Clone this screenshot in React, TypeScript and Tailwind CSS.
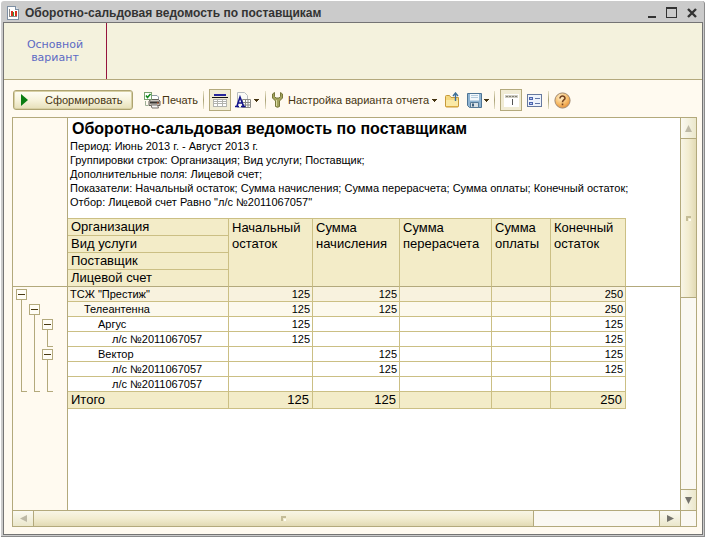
import { useState } from "react";
import type { ReactNode } from "react";

type Row = {
  name: string;
  level: number;
  values: string[];
  bg: string;
  tree: ("box" | "line" | "end")[];
};

const rows: Row[] = [
  {
    name: 'ТСЖ "Престиж"',
    level: 0,
    values: ["125", "125", "", "", "250"],
    bg: "bg-[#f8f2de]",
    tree: ["box"],
  },
  {
    name: "Телеантенна",
    level: 1,
    values: ["125", "125", "", "", "250"],
    bg: "bg-[#fcf9ed]",
    tree: ["line", "box"],
  },
  {
    name: "Аргус",
    level: 2,
    values: ["125", "", "", "", "125"],
    bg: "bg-white",
    tree: ["line", "line", "box"],
  },
  {
    name: "л/с №2011067057",
    level: 3,
    values: ["125", "", "", "", "125"],
    bg: "bg-white",
    tree: ["line", "line", "end"],
  },
  {
    name: "Вектор",
    level: 2,
    values: ["", "125", "", "", "125"],
    bg: "bg-white",
    tree: ["line", "line", "box"],
  },
  {
    name: "л/с №2011067057",
    level: 3,
    values: ["", "125", "", "", "125"],
    bg: "bg-white",
    tree: ["line", "line", "line"],
  },
  {
    name: "л/с №2011067057",
    level: 3,
    values: ["", "", "", "", ""],
    bg: "bg-white",
    tree: ["end", "end", "end"],
  },
];

const indents = ["pl-[2px]", "pl-4", "pl-[30px]", "pl-11"];

const groups = ["Организация", "Вид услуги", "Поставщик", "Лицевой счет"];
const columns = [
  ["Начальный", "остаток"],
  ["Сумма", "начисления"],
  ["Сумма", "перерасчета"],
  ["Сумма", "оплаты"],
  ["Конечный", "остаток"],
];
const totals = ["125", "125", "", "", "250"];

const params = [
  "Период: Июнь 2013 г. - Август 2013 г.",
  "Группировки строк: Организация; Вид услуги; Поставщик;",
  "Дополнительные поля: Лицевой счет;",
  "Показатели: Начальный остаток; Сумма начисления; Сумма перерасчета; Сумма оплаты; Конечный остаток;",
  'Отбор: Лицевой счет Равно "л/с №2011067057"',
];

function ReportIcon() {
  return (
    <svg width="12" height="14" viewBox="0 0 12 14" shapeRendering="crispEdges">
      <path d="M0.5 0.5h8l3 3v10h-11z" fill="#fff" stroke="#7d8fa3" />
      <path d="M8.5 0.5v3h3" fill="#d5dde6" stroke="#7d8fa3" />
      <path d="M2 3h1v7h7v1H2z" fill="#8a8a8a" />
      <path d="M4 5h2v5H4zM8 5h2v5H8z" fill="#d8321e" />
      <path d="M6 6h1v4H6z" fill="#2f9a3a" />
    </svg>
  );
}

function PrintIcon() {
  return (
    <svg width="17" height="17" viewBox="0 0 17 17">
      <path d="M7 3.5h6l1.5 1.5v4H7z" fill="#fff" stroke="#8f9aa5" />
      <path d="M5 9l2-1.5h7.5L16 9v4.5H5z" fill="#c9c6c0" stroke="#66615b" />
      <path d="M6 10.5h9" stroke="#3b3835" strokeWidth="2" />
      <path d="M7 13h6.5l1 3H8z" fill="#f5f5f5" stroke="#77716b" />
      <path d="M13 11h1.500" stroke="#e3602c" />
      <rect x="0.5" y="0.5" width="7" height="7" fill="#fff" stroke="#7aa06e" />
      <path d="M2 3.5l1.5 2L6.500 2" fill="none" stroke="#138a1b" strokeWidth="1.5" />
      <path d="M1.5 9v4.5h3" fill="none" stroke="#9fb097" />
    </svg>
  );
}

function HeaderIcon() {
  return (
    <svg width="16" height="15" viewBox="0 0 16 15" shapeRendering="crispEdges">
      <path d="M2 1h12v2H2z" fill="#26269c" />
      <path d="M0 4h16v1H0z" fill="#111" />
      <path d="M1 6h14v8H1z" fill="#fff" />
      <path
        d="M1.5 6v8M5.5 6v8M10.5 6v8M14.5 6v8M1 6.5h14M1 8.5h14M1 10.5h14M1 13.5h14"
        stroke="#b3b3ae"
        fill="none"
      />
    </svg>
  );
}

function FontIcon() {
  return (
    <svg width="17" height="17" viewBox="0 0 17 17">
      <path d="M2.5 0.5h7l3 3v12h-10z" fill="#fbfbf6" stroke="#b8bcc0" />
      <path d="M7.5 7.5h8v8h-8z" fill="#fff" stroke="#8b8b86" />
      <path d="M7.5 10.500h8M7.5 13h8M10.5 7.5v8M13 7.5v8" stroke="#8b8b86" />
      <path
        d="M0 14.5h4M6 14.5h4.500M2 14L5 5l3.500 9M3 11h4"
        stroke="#14148c"
        strokeWidth="1.6"
        fill="none"
      />
    </svg>
  );
}

function WrenchIcon() {
  return (
    <svg width="11" height="16" viewBox="0 0 11 16">
      <path
        d="M2.5 0.5L0.5 2v4L3.500 9v5.500q2 1.500 4 0V9L10.500 6V2L8.500 0.500V4.500L7 6H4L2.500 4.500z"
        fill="#a3a35c"
        stroke="#77773a"
      />
      <path d="M4.500 8v6" stroke="#dadda5" />
    </svg>
  );
}

function FolderIcon() {
  return (
    <svg width="15" height="16" viewBox="0 0 15 16">
      <path d="M0.5 14V4.5q0-1 1-1h3l1.5 2h7.5V14q0 1-1 1h-11q-1 0-1-1z" fill="#f6d981" stroke="#c69a3b" />
      <path d="M1 14V8h12v6z" fill="#fae9a6" />
      <path d="M1 14.5h12" stroke="#dba93f" />
      <path d="M10.5 9V2M8 4l2.5-3L13 4" fill="none" stroke="#3d6f98" strokeWidth="1.4" />
    </svg>
  );
}

function SaveIcon() {
  return (
    <svg width="15" height="15" viewBox="0 0 15 15">
      <path d="M0.5 0.5h14v14h-12l-2-2z" fill="#8fb4d2" stroke="#4f7595" />
      <path d="M3 1h9v6.5H3z" fill="#f4f8fb" />
      <path d="M4 2.5h7M4 4.5h7" stroke="#b5cbdc" />
      <path d="M3.5 9.5h8v5h-8z" fill="#d9e1e6" stroke="#567a97" />
      <path d="M5 10.5h2v3H5z" fill="#3f617e" />
    </svg>
  );
}

function PanesIcon() {
  return (
    <svg width="15" height="13" viewBox="0 0 15 13" shapeRendering="crispEdges">
      <path d="M0 0h15v13H0z" fill="#fff" />
      <path d="M1 1h13v3H1z" fill="#cfcdc2" />
      <path d="M2 2h2v1H2zM5 2h2v1H5zM8 2h2v1H8zM11 2h2v1h-2z" fill="#85847b" />
      <path d="M8 5h1v6H8z" fill="#555" />
    </svg>
  );
}

function ListIcon() {
  return (
    <svg width="15" height="13" viewBox="0 0 15 13" shapeRendering="crispEdges">
      <path d="M0.5 0.5h14v12h-14z" fill="#eef3fb" stroke="#66799f" />
      <path d="M2 3h4v3H2zM2 8h4v3H2z" fill="#4c64ad" />
      <path d="M3 4h2v1H3zM3 9h2v1H3z" fill="#b8c8ee" />
      <path d="M8 4h5v1H8zM8 9h5v1H8z" fill="#6177a8" />
    </svg>
  );
}

function HelpIcon() {
  return (
    <svg width="17" height="17" viewBox="0 0 17 17">
      <defs>
        <radialGradient id="help" cx="0.4" cy="0.3" r="0.75">
          <stop offset="0" stopColor="#fff1cf" />
          <stop offset="0.6" stopColor="#f7bb67" />
          <stop offset="1" stopColor="#e48b35" />
        </radialGradient>
      </defs>
      <circle cx="8.5" cy="8.5" r="7.6" fill="url(#help)" stroke="#a08a73" />
      <path
        d="M6 6.5c0-3.3 5-3.3 5-0.3 0 1.8-2.5 1.7-2.5 4M8.5 11.5v1.8"
        fill="none"
        stroke="#754321"
        strokeWidth="1.6"
      />
    </svg>
  );
}

function Caret() {
  return (
    <svg width="5" height="3" viewBox="0 0 5 3" shapeRendering="crispEdges">
      <path d="M0 0h5v1H4v1H3v1H2V2H1V1H0z" fill="#463512" />
    </svg>
  );
}

function Separator() {
  return <span className="h-[18px] w-px bg-gradient-to-b from-[#e8e2c8] via-[#a9a176] to-[#e8e2c8]" />;
}

function ToolButton({
  label,
  pressed,
  children,
}: {
  label: string;
  pressed?: boolean;
  children: ReactNode;
}) {
  return (
    <button
      type="button"
      aria-label={label}
      className={
        pressed
          ? "flex size-[22px] items-center justify-center border border-[#b3a97c] bg-[#f1ecd5]"
          : "flex h-[22px] items-center gap-[2px]"
      }
    >
      {children}
    </button>
  );
}

function Arrow({ dir, dim }: { dir: "up" | "down" | "left" | "right"; dim?: boolean }) {
  const paths = {
    up: "M0 7L3.5 0L7 7z",
    down: "M0 0h7L3.5 7z",
    left: "M7 0v7L0 3.5z",
    right: "M0 0v7l7-3.5z",
  };
  return (
    <svg width="7" height="7" viewBox="0 0 7 7">
      <path d={paths[dir]} fill={dim ? "#bdb9a6" : "#74736c"} />
    </svg>
  );
}

function Grip() {
  return (
    <svg width="5" height="5" viewBox="0 0 5 5" shapeRendering="crispEdges">
      <path d="M0 0h5v2H2v3H0z" fill="#c4bc97" />
      <path d="M3 3h2v2H3z" fill="#fffdf2" />
    </svg>
  );
}

function TreeCell({ kind, open, onToggle }: { kind: string; open: boolean; onToggle: () => void }) {
  if (kind === "box") {
    return (
      <div className="flex w-[13px] flex-col pt-[2px]">
        <button
          type="button"
          aria-label={open ? "Свернуть группу" : "Развернуть группу"}
          aria-expanded={open}
          onClick={onToggle}
          className="flex size-[11px] items-center justify-center border border-[#b3a97c] bg-[#fffdf5]"
        >
          <svg width="7" height="7" viewBox="0 0 7 7" shapeRendering="crispEdges">
            <path d={open ? "M0 3h7v1H0z" : "M0 3h7v1H0zM3 0h1v7H3z"} fill="#4a3a12" />
          </svg>
        </button>
        {open && <span className="ml-[5px] w-px grow bg-[#b3a97c]" />}
      </div>
    );
  }
  return (
    <div className="w-[13px] pl-[5px]">
      {kind === "line" && <div className="h-full w-px bg-[#b3a97c]" />}
      {kind === "end" && <div className="h-full w-[6px] border-b border-l border-[#b3a97c]" />}
    </div>
  );
}

function App() {
  const [closed, setClosed] = useState<number[]>([]);

  const toggle = (i: number) =>
    setClosed((prev) => (prev.includes(i) ? prev.filter((n) => n !== i) : [...prev, i]));

  // a row is hidden while any group above it is collapsed
  const isVisible = (i: number) => {
    let level = rows[i].level;
    for (let n = i - 1; n >= 0; n--) {
      if (rows[n].level < level) {
        if (closed.includes(n)) return false;
        level = rows[n].level;
      }
    }
    return true;
  };

  const visible = rows.map((row, index) => ({ row, index })).filter(({ index }) => isVisible(index));

  return (
    <div className="h-screen min-h-[420px] bg-white p-px font-['Liberation_Sans',Arial,sans-serif] text-black">
      <div className="flex h-full flex-col rounded-t-[3px] border-r border-b border-[#8c8c8c] bg-[#cbcbcb] pr-px pb-px pl-[2px]">
        <header className="flex h-[21px] shrink-0 items-center pt-[2px] pr-[6px] pl-1">
          <ReportIcon />
          <h1 className="ml-[6px] grow text-[12px] leading-4 font-bold whitespace-nowrap text-[#333]">
            Оборотно-сальдовая ведомость по поставщикам
          </h1>
          <div className="flex items-center gap-[10px]">
            <button type="button" aria-label="Свернуть" className="flex h-[11px] w-2 items-end">
              <span className="h-[2px] w-full bg-[#333]" />
            </button>
            <button
              type="button"
              aria-label="Развернуть"
              className="h-[11px] w-[11px] border border-t-2 border-[#333]"
            />
            <button type="button" aria-label="Закрыть">
              <svg width="10" height="10" viewBox="0 0 10 10">
                <path d="M1 1l8 8M9 1l-8 8" stroke="#333" strokeWidth="2.4" />
              </svg>
            </button>
          </div>
        </header>

        <div className="flex min-h-0 grow flex-col border border-[#747474] bg-[#fffaf0]">
          <nav className="flex h-[57px] shrink-0 border-b border-[#b3a97c] bg-[#f4f2dd]">
            <button
              type="button"
              className="w-[103px] border-r border-[#96143c] font-['DejaVu_Sans',Verdana,sans-serif] text-[11px] leading-[13px] text-[#5c6ac4]"
            >
              Основной
              <br />
              вариант
            </button>
          </nav>

          <div className="flex h-[37px] shrink-0 items-center pt-[3px] pl-[9px] text-[11px] whitespace-nowrap text-[#463512]">
            <button
              type="button"
              className="flex h-5 w-[120px] items-center rounded-[3px] border border-[#aea471] bg-gradient-to-b from-[#fffef6] via-[#f7f3dc] to-[#e6dfb8] pl-[7px] shadow-[inset_0_0_0_1px_#d8d0a4]"
            >
              <svg width="7" height="12" viewBox="0 0 7 12">
                <path d="M0 0l7 6-7 6z" fill="#0a7d12" />
              </svg>
              <span className="ml-[17px]">Сформировать</span>
            </button>
            <button type="button" className="ml-[11px] flex items-center gap-px">
              <PrintIcon />
              Печать
            </button>
            <div className="flex w-[11px] justify-center">
              <Separator />
            </div>
            <ToolButton label="Заголовок" pressed>
              <HeaderIcon />
            </ToolButton>
            <div className="ml-1 flex">
              <ToolButton label="Оформление">
                <FontIcon />
                <Caret />
              </ToolButton>
            </div>
            <div className="flex w-[13px] justify-center">
              <Separator />
            </div>
            <button type="button" className="flex items-center">
              <WrenchIcon />
              <span className="mr-[3px] ml-[5px]">Настройка варианта отчета</span>
              <Caret />
            </button>
            <div className="ml-2 flex gap-[7px]">
              <ToolButton label="Выбрать вариант">
                <FolderIcon />
              </ToolButton>
              <ToolButton label="Сохранить вариант">
                <SaveIcon />
                <Caret />
              </ToolButton>
            </div>
            <div className="flex w-[11px] justify-center">
              <Separator />
            </div>
            <ToolButton label="Панель настроек" pressed>
              <PanesIcon />
            </ToolButton>
            <div className="ml-[5px] flex">
              <ToolButton label="Список настроек">
                <ListIcon />
              </ToolButton>
            </div>
            <div className="flex w-3 justify-center">
              <Separator />
            </div>
            <ToolButton label="Справка">
              <HelpIcon />
            </ToolButton>
          </div>

          <main className="mr-[5px] mb-[7px] ml-2 flex min-h-0 grow flex-col border border-[#b3a97c] bg-white">
            <div className="flex min-h-0 grow">
              <aside className="flex w-[55px] shrink-0 flex-col border-r border-[#b3a97c] bg-[#fffaf0]">
                <div className="h-[169px] shrink-0 border-b border-[#b3a97c]" />
                {visible.map(({ row, index }) => (
                  <div key={index} className="flex h-[15px] shrink-0 pl-[3px]">
                    {row.tree.map((kind, n) => (
                      <TreeCell
                        key={n}
                        kind={kind}
                        open={!closed.includes(index)}
                        onToggle={() => toggle(index)}
                      />
                    ))}
                  </div>
                ))}
              </aside>

              <section className="min-w-0 grow overflow-hidden">
                <div className="h-[100px] whitespace-nowrap">
                  <h2 className="pl-1 text-[16px] leading-[21px] font-bold">
                    Оборотно-сальдовая ведомость по поставщикам
                  </h2>
                  {params.map((line) => (
                    <p key={line} className="pl-[2px] text-[11px] leading-[14px]">
                      {line}
                    </p>
                  ))}
                </div>

                <table className="w-full table-fixed border-separate border-spacing-0 text-[11px]">
                  <colgroup>
                    <col className="w-[161px]" />
                    <col className="w-[84px]" />
                    <col className="w-[87px]" />
                    <col className="w-[92px]" />
                    <col className="w-[59px]" />
                    <col className="w-[75px]" />
                    <col />
                  </colgroup>
                  <thead className="text-left text-[13px]">
                    {groups.map((group, i) => (
                      <tr key={group}>
                        <th
                          className={
                            i === 0
                              ? "h-[18px] border-y border-r border-[#cbbf84] bg-[#f3ecc8] py-0 pr-0 pl-[3px] leading-4 font-normal"
                              : i === 3
                                ? "h-[17px] border-r border-b border-r-[#cbbf84] border-b-[#b3a97c] bg-[#f3ecc8] py-0 pr-0 pl-[3px] leading-4 font-normal"
                                : "h-[17px] border-r border-b border-[#cbbf84] bg-[#f3ecc8] py-0 pr-0 pl-[3px] leading-4 font-normal"
                          }
                        >
                          {group}
                        </th>
                        {i === 0 &&
                          columns.map(([first, second], n) => (
                            <th
                              key={n}
                              rowSpan={4}
                              className="border-t border-r border-b border-t-[#cbbf84] border-r-[#cbbf84] border-b-[#b3a97c] bg-[#f3ecc8] pt-px pr-0 pb-0 pl-[3px] align-top leading-4 font-normal"
                            >
                              {first}
                              <br />
                              {second}
                            </th>
                          ))}
                        {i === 0 && <td rowSpan={4} className="border-b border-[#b3a97c] p-0" />}
                      </tr>
                    ))}
                  </thead>
                  <tbody>
                    {visible.map(({ row, index }) => (
                      <tr key={index}>
                        <td
                          className={`h-[15px] border-r border-b border-[#cbbf84] py-0 pr-0 leading-[14px] ${row.bg} ${indents[row.level]}`}
                        >
                          {row.name}
                        </td>
                        {row.values.map((value, n) => (
                          <td
                            key={n}
                            className={`h-[15px] border-r border-b border-[#cbbf84] py-0 pr-[2px] pl-0 text-right leading-[14px] ${row.bg}`}
                          >
                            {value}
                          </td>
                        ))}
                      </tr>
                    ))}
                  </tbody>
                  <tfoot className="text-[13px]">
                    <tr>
                      <td className="h-[17px] border-r border-b border-[#cbbf84] bg-[#f3ecc8] py-0 pr-0 pl-[3px] leading-4">
                        Итого
                      </td>
                      {totals.map((value, n) => (
                        <td
                          key={n}
                          className="h-[17px] border-r border-b border-[#cbbf84] bg-[#f3ecc8] py-0 pr-[3px] pl-0 text-right leading-4"
                        >
                          {value}
                        </td>
                      ))}
                    </tr>
                  </tfoot>
                </table>
              </section>

              <div className="flex w-4 shrink-0 flex-col border-l border-[#b3a97c] bg-[#faf8f2]">
                <button
                  type="button"
                  aria-label="Вверх"
                  className="flex h-[21px] shrink-0 items-center justify-center border-b border-[#b3a97c] bg-gradient-to-r from-[#fbfaf2] to-[#ebe7cb]"
                >
                  <Arrow dir="up" dim />
                </button>
                <div className="flex h-[159px] shrink-0 items-center justify-center border-b border-[#b3a97c] bg-gradient-to-r from-[#f8f5e6] via-[#f2ecd0] to-[#e2dab4]">
                  <Grip />
                </div>
                <div className="grow" />
                <button
                  type="button"
                  aria-label="Вниз"
                  className="flex h-[21px] shrink-0 items-center justify-center border-t border-[#b3a97c] bg-gradient-to-r from-[#fbfaf2] to-[#ebe7cb]"
                >
                  <Arrow dir="down" />
                </button>
              </div>
            </div>

            <div className="flex h-4 shrink-0 border-t border-[#b3a97c] bg-[#faf8f2]">
              <button
                type="button"
                aria-label="Влево"
                className="flex w-[21px] shrink-0 items-center justify-center border-r border-[#b3a97c] bg-gradient-to-b from-[#fbfaf2] to-[#ebe7cb]"
              >
                <Arrow dir="left" dim />
              </button>
              <div className="flex grow">
                <div className="flex w-4/5 items-center justify-center border-r border-[#b3a97c] bg-gradient-to-b from-[#f8f5e6] via-[#f2ecd0] to-[#e2dab4]">
                  <Grip />
                </div>
              </div>
              <button
                type="button"
                aria-label="Вправо"
                className="mr-[15px] flex w-[22px] shrink-0 items-center justify-center border-x border-[#b3a97c] bg-gradient-to-b from-[#fbfaf2] to-[#ebe7cb]"
              >
                <Arrow dir="right" />
              </button>
            </div>
          </main>
        </div>
      </div>
    </div>
  );
}

export default App;
